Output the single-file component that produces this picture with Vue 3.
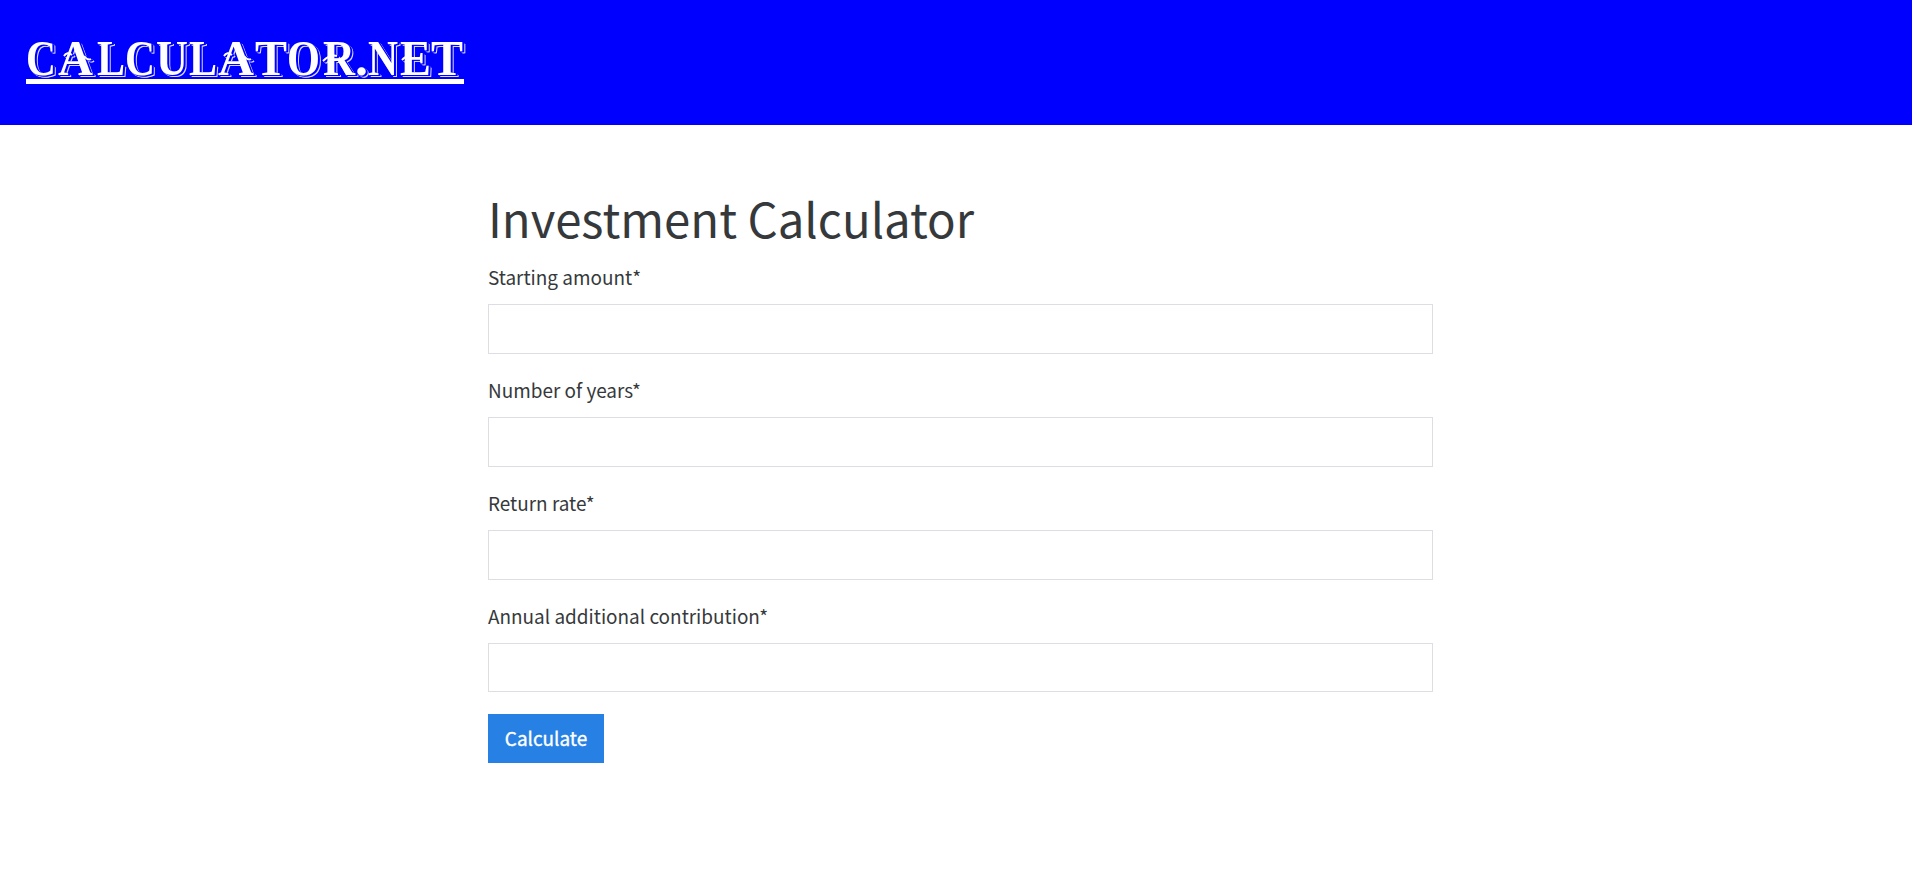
<script setup>
import { ref } from 'vue'

// Each logo letter: glyph, left edge and width
const letters = [
  ['C', 0, 30], ['A', 32, 35], ['L', 71, 28], ['C', 99, 30], ['U', 130, 32],
  ['L', 163, 28], ['A', 192, 36], ['T', 229, 32], ['O', 261, 33], ['R', 297, 32],
  ['.', 329, 13], ['N', 342, 30], ['E', 374, 31], ['T', 405, 32],
]

const fields = ref([
  { id: 'start', label: 'Starting amount*', value: '' },
  { id: 'years', label: 'Number of years*', value: '' },
  { id: 'rate', label: 'Return rate*', value: '' },
  { id: 'contribution', label: 'Annual additional contribution*', value: '' },
])
</script>

<template>
  <header class="header">
    <a class="logo" aria-label="CALCULATOR.NET">
      <svg class="logo-art" width="438" height="45" viewBox="0 0 438 45">
        <g class="face">
          <text v-for="([c, x, w], i) in letters" :key="i" :x="x" y="40.5" :textLength="w" lengthAdjust="spacingAndGlyphs">{{ c }}</text>
          <path class="swash" d="M38 22q3-5 8-1M58 22q4 5 7 3M198 22q3-5 8-1M218 22q4 5 7 3M297 27q7-7 14-5M376 26q4-5 9-3" />
        </g>
      </svg>
    </a>
  </header>
  <main class="main">
    <h1 class="title">Investment Calculator</h1>
    <form @submit.prevent>
      <div v-for="f in fields" :key="f.id" class="field">
        <label class="label" :for="f.id">{{ f.label }}</label>
        <input :id="f.id" v-model="f.value" class="input" type="text">
      </div>
      <button class="button" type="submit">Calculate</button>
    </form>
  </main>
</template>

<style>
body {
  background: #fff;
}
</style>

<style scoped>
.header {
  height: 125px;
  box-sizing: border-box;
  padding: 34px 26px 0;
  background: #00f;
}
.logo {
  display: block;
  width: 438px;
  height: 45px;
  border-bottom: 5px solid #fff;
}
.logo-art {
  display: block;
  overflow: visible;
  font: bold 51px "Liberation Serif", serif;
}
.face {
  fill: #fff;
  filter: drop-shadow(1px 1px 0 #00f) drop-shadow(1px 0 0 #00f) drop-shadow(1px 1px 0 #d8d8ff);
}
.swash {
  fill: none;
  stroke: #fff;
  stroke-width: 2;
}
.main {
  width: 945px;
  margin-left: 488px;
  padding-top: 62px;
  color: #36393b;
  font-family: "Noto Sans CJK SC", "Noto Sans", sans-serif;
}
.title {
  margin: 0;
  height: 74px;
  font-size: 47.3px;
  font-weight: 400;
  line-height: 61px;
}
.field {
  height: 112.9px;
}
.label {
  display: block;
  height: 43px;
  font-size: 18.95px;
  line-height: 32px;
}
.input {
  display: block;
  box-sizing: border-box;
  width: 100%;
  height: 49.8px;
  padding: 0 16px;
  border: 1px solid #dcdee4;
  border-radius: 0;
  background: #fff;
  font: inherit;
  font-size: 19px;
  outline: none;
}
.button {
  display: block;
  width: 116px;
  height: 49px;
  margin-top: 1px;
  padding: 0 0 1px;
  border: 0;
  background: #2780e3;
  color: #fff;
  font: 400 18.95px/47px "Noto Sans CJK SC", "Noto Sans", sans-serif;
  -webkit-text-stroke: 0.35px #fff;
}
</style>
